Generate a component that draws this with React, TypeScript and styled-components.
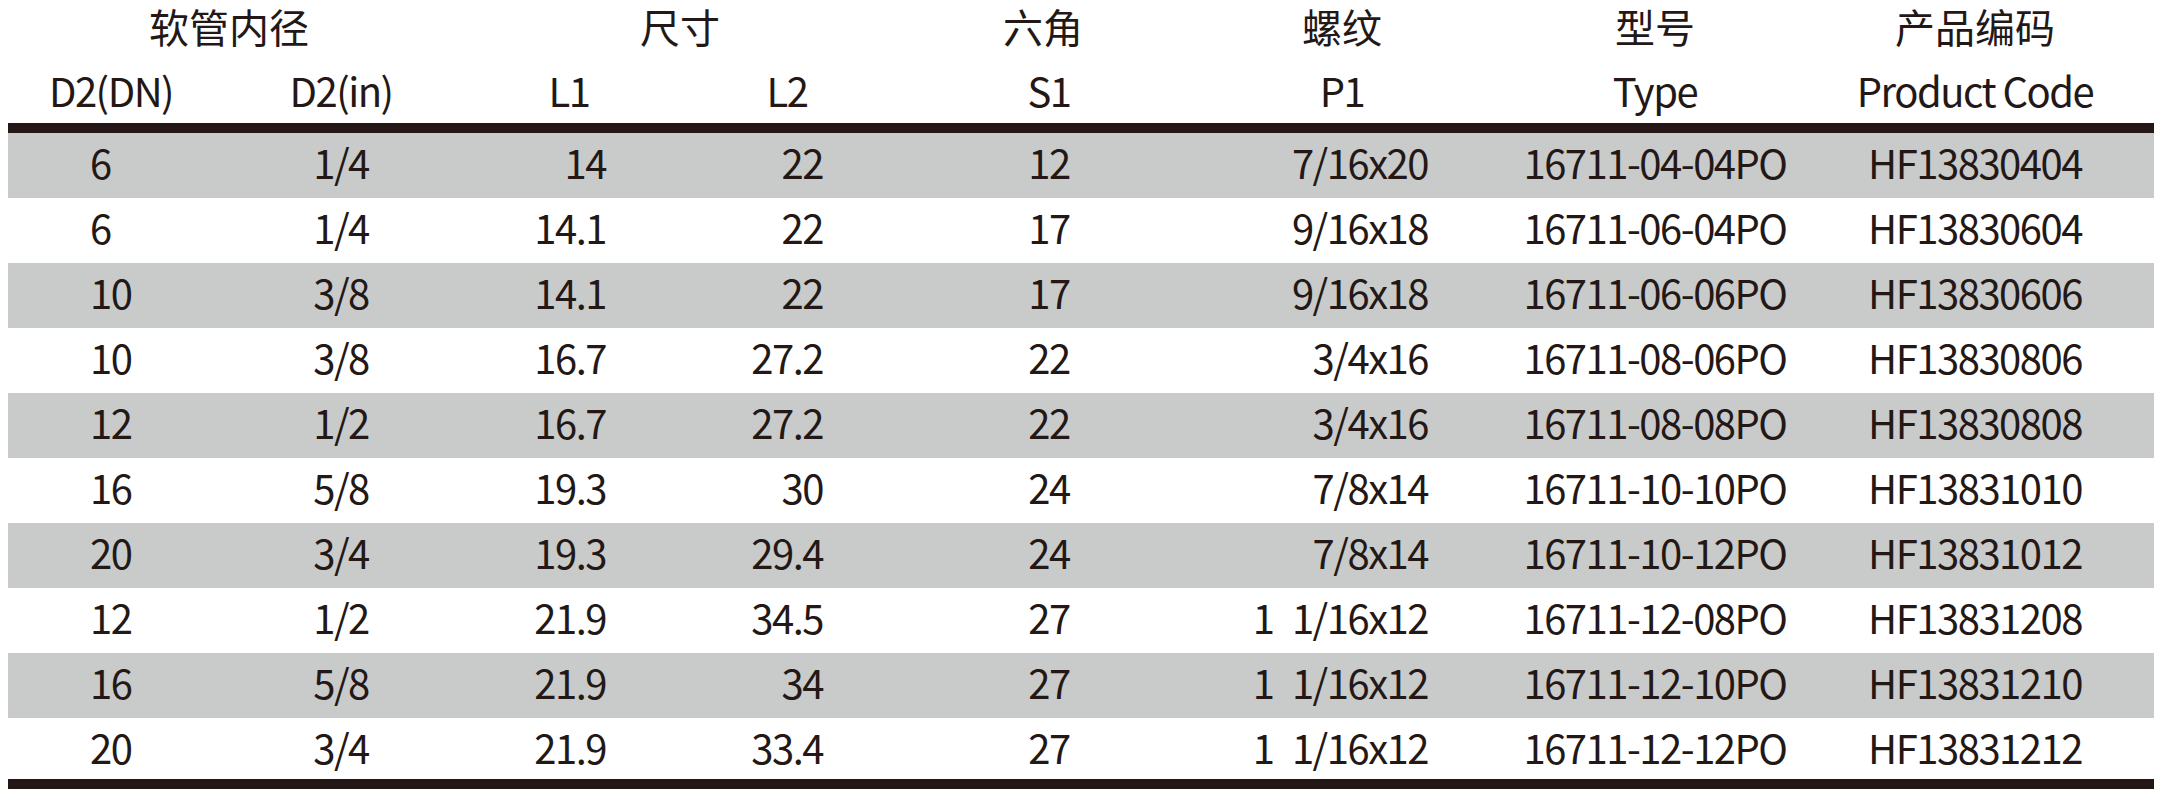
import React from 'react';
import styled, { createGlobalStyle } from 'styled-components';

const GlobalStyle = createGlobalStyle`
  html, body {
    margin: 0;
    padding: 0;
    background: #fff;
  }
  body {
    font-family: "Noto Sans CJK SC", "Noto Sans", sans-serif;
    color: #231815;
  }
`;

type Align = 'left' | 'center' | 'right';

interface Column {
  width: number;
  align: Align;
  // padding on the aligned side, so left/right aligned values sit where the sheet has them
  pad: number;
}

const columns: Column[] = [
  { width: 206, align: 'left', pad: 82 },
  { width: 254, align: 'center', pad: 0 },
  { width: 202, align: 'right', pad: 64 },
  { width: 234, align: 'right', pad: 81 },
  { width: 290, align: 'center', pad: 0 },
  { width: 296, align: 'right', pad: 62 },
  { width: 330, align: 'center', pad: 0 },
  { width: 334, align: 'center', pad: 0 },
];

const gridTemplate = columns.map((c) => `${c.width}px`).join(' ');

const groups = [
  { label: '软管内径', span: 2, nudge: 18 },
  { label: '尺寸', span: 2, nudge: 12 },
  { label: '六角', span: 1, nudge: 12 },
  { label: '螺纹', span: 1, nudge: 0 },
  { label: '型号', span: 1, nudge: 0 },
  { label: '产品编码', span: 1, nudge: 24 },
];

const labels = ['D2(DN)', 'D2(in)', 'L1', 'L2', 'S1', 'P1', 'Type', 'Product Code'];

const rows: string[][] = [
  ['6', '1/4', '14', '22', '12', '7/16x20', '16711-04-04PO', 'HF13830404'],
  ['6', '1/4', '14.1', '22', '17', '9/16x18', '16711-06-04PO', 'HF13830604'],
  ['10', '3/8', '14.1', '22', '17', '9/16x18', '16711-06-06PO', 'HF13830606'],
  ['10', '3/8', '16.7', '27.2', '22', '3/4x16', '16711-08-06PO', 'HF13830806'],
  ['12', '1/2', '16.7', '27.2', '22', '3/4x16', '16711-08-08PO', 'HF13830808'],
  ['16', '5/8', '19.3', '30', '24', '7/8x14', '16711-10-10PO', 'HF13831010'],
  ['20', '3/4', '19.3', '29.4', '24', '7/8x14', '16711-10-12PO', 'HF13831012'],
  ['12', '1/2', '21.9', '34.5', '27', '1\u20021/16x12', '16711-12-08PO', 'HF13831208'],
  ['16', '5/8', '21.9', '34', '27', '1\u20021/16x12', '16711-12-10PO', 'HF13831210'],
  ['20', '3/4', '21.9', '33.4', '27', '1\u20021/16x12', '16711-12-12PO', 'HF13831212'],
];

const Page = styled.div`
  padding: 0 0 12px 8px;
  width: 2146px;
`;

const Table = styled.div`
  display: flex;
  flex-direction: column;
  font-size: 40px;
  letter-spacing: -1.5px;
  color: #231815;
`;

const GroupRow = styled.div`
  display: grid;
  grid-template-columns: ${gridTemplate};
  height: 58px;
  letter-spacing: 0;
`;

const GroupCell = styled.div<{ $span: number; $nudge: number }>`
  grid-column: span ${(p) => p.$span};
  text-align: center;
  line-height: 52px;
  padding-right: ${(p) => p.$nudge}px;
  white-space: nowrap;
`;

const LabelRow = styled.div`
  display: grid;
  grid-template-columns: ${gridTemplate};
  height: 65px;
`;

const LabelCell = styled.div<{ $last?: boolean }>`
  text-align: center;
  line-height: 65px;
  padding-right: ${(p) => (p.$last ? 24 : 0)}px;
  white-space: nowrap;
`;

const Rule = styled.div<{ $closing?: boolean }>`
  height: 10px;
  background: #231815;
  margin-top: ${(p) => (p.$closing ? -4 : 0)}px;
`;

const DataRow = styled.div<{ $shaded: boolean }>`
  display: grid;
  grid-template-columns: ${gridTemplate};
  height: 65px;
  background: ${(p) => (p.$shaded ? '#c9caca' : '#fff')};
`;

const DataCell = styled.div<{ $align: Align; $pad: number; $last?: boolean }>`
  text-align: ${(p) => p.$align};
  padding-left: ${(p) => (p.$align === 'left' ? p.$pad : 0)}px;
  padding-right: ${(p) => (p.$align === 'right' ? p.$pad : p.$last ? 24 : 0)}px;
  line-height: 58px;
  white-space: pre;
`;

export default function App() {
  return (
    <>
      <GlobalStyle />
      <Page>
        <Table>
          <GroupRow>
            {groups.map((g) => (
              <GroupCell key={g.label} $span={g.span} $nudge={g.nudge}>
                {g.label}
              </GroupCell>
            ))}
          </GroupRow>
          <LabelRow>
            {labels.map((l, i) => (
              <LabelCell key={l} $last={i === labels.length - 1}>
                {l}
              </LabelCell>
            ))}
          </LabelRow>
          <Rule />
          {rows.map((r, ri) => (
            <DataRow key={r[7]} $shaded={ri % 2 === 0}>
              {r.map((v, ci) => (
                <DataCell
                  key={ci}
                  $align={columns[ci].align}
                  $pad={columns[ci].pad}
                  $last={ci === columns.length - 1}
                >
                  {v}
                </DataCell>
              ))}
            </DataRow>
          ))}
          <Rule $closing />
        </Table>
      </Page>
    </>
  );
}
